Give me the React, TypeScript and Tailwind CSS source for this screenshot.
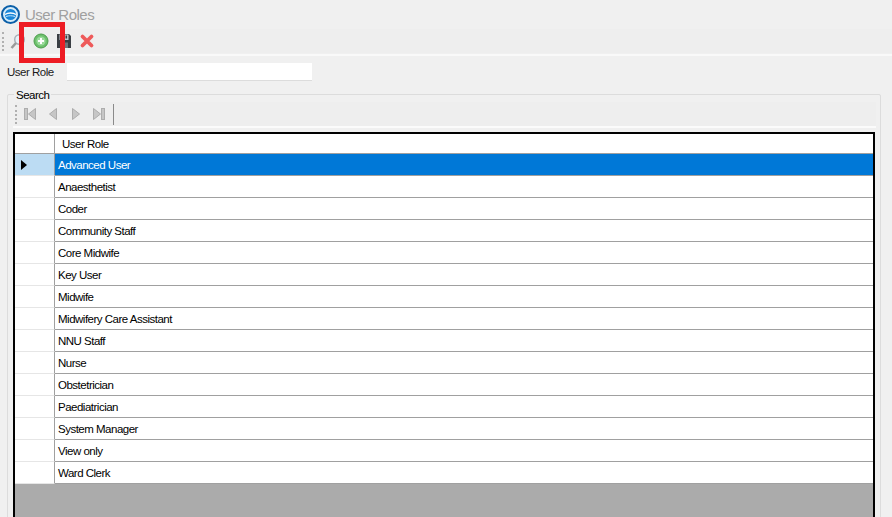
const rows = ["Advanced User","Anaesthetist","Coder","Community Staff","Core Midwife","Key User","Midwife","Midwifery Care Assistant","NNU Staff","Nurse","Obstetrician","Paediatrician","System Manager","View only","Ward Clerk"];

function Grip() {
  return <div className="w-[2px] h-[19px] mr-[5px] border-l-2 border-dotted border-[#b0b0b0]" />;
}

function Nav({ flip, bar }: { flip?: boolean; bar?: boolean }) {
  return (
    <svg width="14" height="14" viewBox="0 0 14 14" className="shrink-0">
      <g transform={flip ? "" : "translate(14,0) scale(-1,1)"} fill="#c6c6c6" stroke="#adadad">
        {bar && <rect x="1.5" y="1.5" width="3" height="11" />}
        <path d={bar ? "M12.5 1.5 L5.5 7 L12.5 12.5Z" : "M10.5 1.5 L3.5 7 L10.5 12.5Z"} />
      </g>
    </svg>
  );
}

export default function App() {
  return (
    <div className="relative w-[892px] h-[517px] overflow-hidden bg-[#f0f0f0] text-[11.5px] tracking-[-0.5px] text-[#000] font-['Liberation_Sans',sans-serif]">
      <div className="h-[29px] flex items-center pl-[1px] gap-[6px]">
        <svg width="19" height="19" viewBox="0 0 19 19">
          <circle cx="9.5" cy="9.5" r="8.5" fill="#d6ecfa" stroke="#0b5fa8" strokeWidth="2" />
          <circle cx="9.5" cy="9.5" r="5.6" fill="#1a86d8" />
          <path d="M4 9.5C7 7.5 12 7.5 15 9.5" fill="none" stroke="#fff" strokeWidth="1.4" />
          <path d="M5 11.5C8 10.5 11 10.5 14 11.5" fill="none" stroke="#bfe2f8" strokeWidth="1" />
        </svg>
        <span className="text-[15px] tracking-[-0.5px] text-[#a0a0a0] ml-[-1px] mt-[1px]">User Roles</span>
      </div>
      <div className="h-[24px] bg-[#eeeeee] flex items-center pl-[2px] mb-[1px]">
        <Grip />
        <div className="flex items-center gap-[7px]">
          <svg width="17" height="17" viewBox="0 0 17 17">
            <circle cx="10.5" cy="6.5" r="4.8" fill="#eaf1f7" stroke="#a8b0b8" strokeWidth="1.5" />
            <path d="M7 10L2.5 15" stroke="#9a9a9a" strokeWidth="2.6" />
          </svg>
          <svg width="16" height="16" viewBox="0 0 16 16">
            <circle cx="8" cy="8" r="7" fill="#6cc06c" stroke="#4d9d4d" />
            <circle cx="8" cy="8" r="4.6" fill="#9ada9a" />
            <path d="M8 5v6M5 8h6" stroke="#fff" strokeWidth="2" />
          </svg>
          <svg width="16" height="16" viewBox="0 0 16 16">
            <path d="M1 1h12l2 2v12H1z" fill="#3a3f44" />
            <rect x="3.5" y="1.5" width="9" height="5.5" fill="#c4cad0" />
            <rect x="9.5" y="2.5" width="1.6" height="3" fill="#3a3f44" />
            <rect x="4" y="9.5" width="8" height="5.5" fill="#70757a" />
          </svg>
          <svg width="16" height="16" viewBox="0 0 16 16">
            <path d="M3.5 3.5L12.5 12.5M12.5 3.5L3.5 12.5" stroke="#ee5a5a" strokeWidth="3.8" strokeLinecap="round" />
          </svg>
        </div>
      </div>
      <div className="h-[2px] bg-white opacity-60" />
      <div className="flex items-center h-[27px] mt-[3px] pl-[7px]">
        <span className="w-[60px] text-[#1a1a1a]">User Role</span>
        <div className="w-[245px] h-[18px] bg-white border-b border-[#dcdcdc] mt-[-1px]" />
      </div>
      <div className="relative mt-[8px] ml-[7px] mr-[11px] h-[440px] border border-[#dcdcdc] rounded-[2px] pl-[5px] pr-[4px] pt-[6px]">
        <span className="absolute top-[-7px] left-[6px] px-[2px] bg-[#f0f0f0] leading-[14px]">Search</span>
        <div className="h-[24px] flex items-center bg-[#eeeeee] ml-[2px] mt-[1px]">
          <Grip />
          <div className="flex items-center gap-[9px] ml-[1px]">
            <Nav flip bar />
            <Nav flip />
            <Nav />
            <Nav bar />
          </div>
          <div className="w-px h-[21px] bg-[#8a8a8a] ml-[7px]" />
        </div>
        <div className="h-[2px] bg-white opacity-70" />
        <div className="mt-[4px] mr-[1px] h-[400px] border-2 border-black bg-[#ababab] overflow-hidden">
          <div className="flex h-[20px] bg-white border-b border-[#a0a0a0]">
            <div className="w-[40px] border-r border-[#a0a0a0] bg-white" />
            <div className="pl-[7px] leading-[20px]">User Role</div>
          </div>
          {rows.map((r, i) => (
            <div key={r} className={`flex h-[22px] ${i === 0 ? "text-white" : ""}`}>
              <div className={`w-[40px] flex items-center pl-[6px] border-r border-b border-r-[#a0a0a0] border-b-[#e6e6e6] ${i === 0 ? "bg-[#bcdcf3]" : "bg-white"}`}>
                {i === 0 && (
                  <svg width="6" height="10" viewBox="0 0 6 10"><path d="M0 0L6 5L0 10Z" fill="#000" /></svg>
                )}
              </div>
              <div className={`flex-1 pl-[3px] leading-[22px] border-b border-[#a0a0a0] ${i === 0 ? "bg-[#0078d7]" : "bg-white"}`}>{r}</div>
            </div>
          ))}
        </div>
      </div>
      <div className="absolute left-[19px] top-[22px] w-[46px] h-[41px] border-[5px] border-[#ed1c24]" />
    </div>
  );
}
